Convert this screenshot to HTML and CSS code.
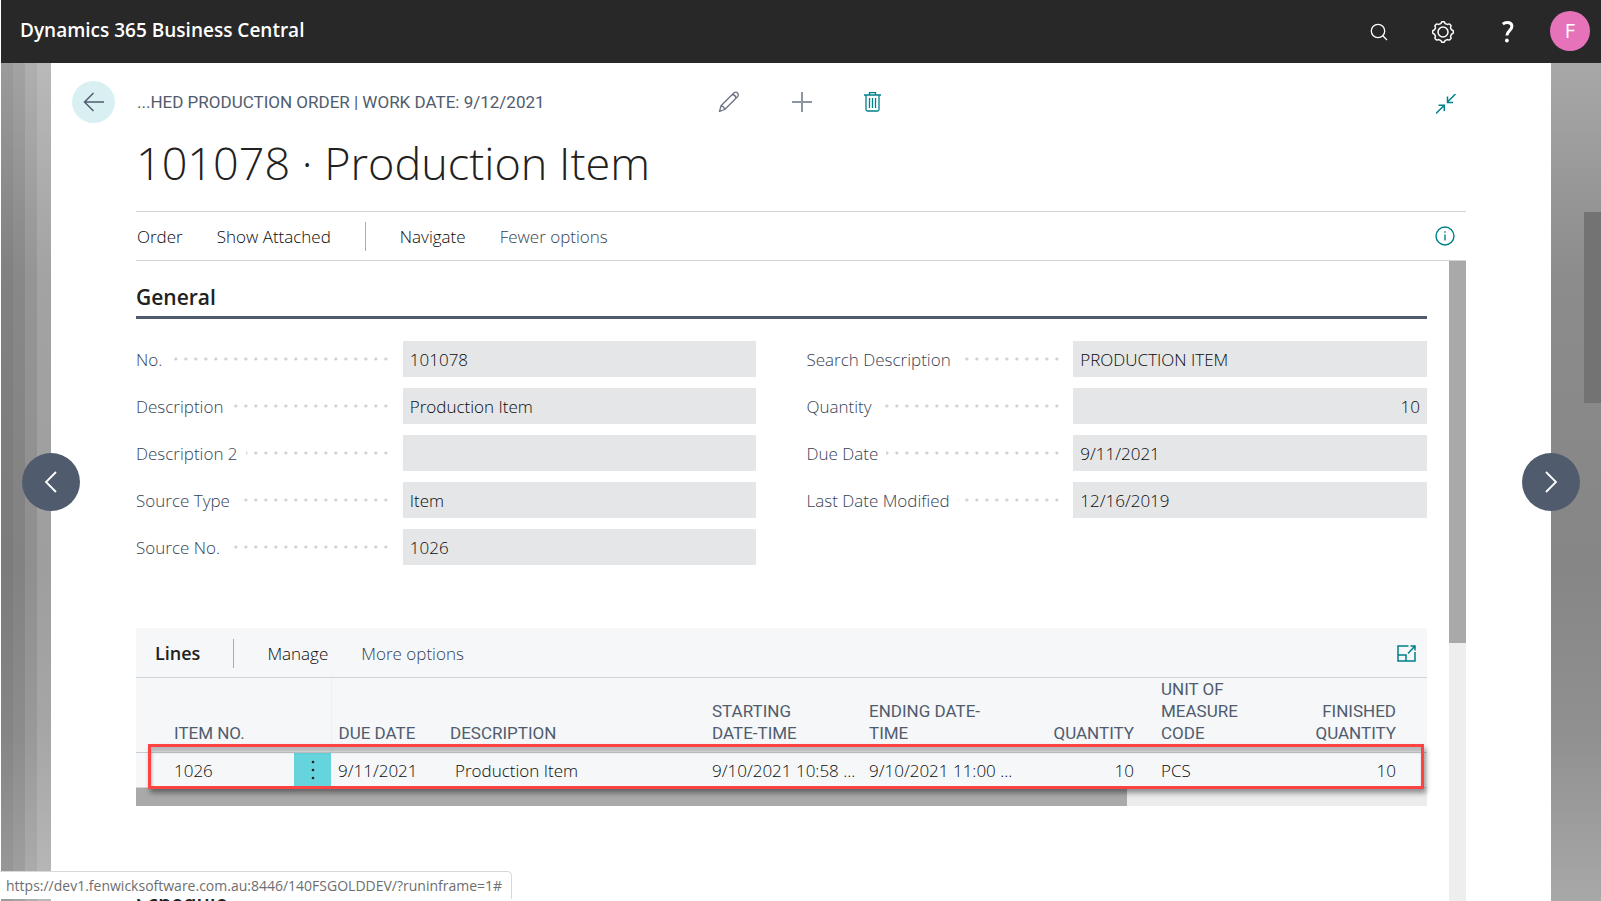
FILE: index.html
```
<!DOCTYPE html>
<html lang="en">
<head>
    <meta charset="UTF-8">
    <meta name="viewport" content="width=device-width, initial-scale=1.0">
    <title>Dynamics 365 Business Central</title>
    <link rel="stylesheet" href="styles.css">
</head>
<body>
    <header class="topbar">
        <span class="brand">Dynamics 365 Business Central</span>
        <div class="topbar-tools">
            <button class="icon-btn" aria-label="Search">
                <svg width="18" height="18" viewBox="0 0 18 18" fill="none" stroke="#fff" stroke-width="1.3"><circle cx="8" cy="8" r="6.7"/><path d="M12.8 12.8L17 17"/></svg>
            </button>
            <button class="icon-btn" aria-label="Settings">
                <svg width="24" height="24" viewBox="0 0 24 24" fill="none" stroke="#fff" stroke-width="1.5" stroke-linejoin="round"><circle cx="12" cy="12" r="5"/><path d="M9.7 3.6C10.3 3.3 10.4 1.7 11 1.7h2c.6 0 .7 1.6 1.3 1.9.7.3 1.3.5 1.9.8.7.2 1.8-.8 2.3-.4L20 5.500c.4.5-.6 1.600-.4 2.300.3.600.5 1.200.8 1.900.3.600 1.900.7 1.900 1.300v2c0 .6-1.600.7-1.900 1.300-.3.7-.5 1.300-.8 1.900-.2.7.8 1.800.4 2.300L18.500 20c-.5.4-1.600-.6-2.300-.4-.6.3-1.200.5-1.900.8-.6.3-.7 1.900-1.300 1.900h-2c-.6 0-.7-1.600-1.300-1.900-.7-.3-1.300-.5-1.900-.8-.7-.2-1.800.8-2.300.4L4 18.500c-.4-.5.6-1.600.4-2.300-.3-.6-.5-1.200-.8-1.900C3.300 13.700 1.700 13.600 1.700 13v-2c0-.6 1.600-.7 1.900-1.300.3-.7.5-1.300.8-1.900C4.600 7.100 3.600 6 4 5.500L5.500 4c.5-.4 1.600.6 2.300.4.6-.3 1.200-.5 1.900-.8z"/></svg>
            </button>
            <button class="icon-btn" aria-label="Help">
                <svg width="14" height="22" viewBox="0 0 14 22" fill="none" stroke="#fff" stroke-width="3"><path d="M1.8 3.200C3 2.200 4.600 1.600 6.300 1.600c2.800 0 4.600 1.500 4.600 4 0 3.900-5 4.200-5 8.900"/><circle cx="5.900" cy="19.500" r="1.900" fill="#fff" stroke="none"/></svg>
            </button>
            <button class="avatar">F</button>
        </div>
    </header>

    <div class="backdrop">
        <button class="pager pager-prev" aria-label="Previous">
            <svg width="14" height="22" viewBox="0 0 14 22" fill="none" stroke="#fff" stroke-width="1.8"><path d="M12 1L2 11l10 10"/></svg>
        </button>
        <button class="pager pager-next" aria-label="Next">
            <svg width="14" height="22" viewBox="0 0 14 22" fill="none" stroke="#fff" stroke-width="1.8"><path d="M2 1l10 10L2 21"/></svg>
        </button>
        <div class="page-scroll"></div>

        <main class="page">
            <div class="page-head">
                <button class="back" aria-label="Back">
                    <svg width="22" height="20" viewBox="0 0 22 20" fill="none" stroke="#505c6d" stroke-width="1.5"><path d="M21 10H2M10.5 1L1.5 10l9 9"/></svg>
                </button>
                <span class="caption">...HED PRODUCTION ORDER | WORK DATE: 9/12/2021</span>
                <div class="page-actions">
                    <button class="icon-btn" aria-label="Edit">
                        <svg width="22" height="22" viewBox="0 0 22 22" fill="none" stroke="#6b7280" stroke-width="1.3" stroke-linejoin="round"><path d="M1.5 20.500l1.500-5.700L15.800 2c1.200-1.200 2.800-.9 3.700 0s1.200 2.500 0 3.700L6.700 18.500zM3 14.800c1.800.2 3.400 1.700 3.700 3.700M14.300 3.500c1.800.2 3.400 1.700 3.700 3.700"/></svg>
                    </button>
                    <button class="icon-btn" aria-label="New">
                        <svg width="20" height="20" viewBox="0 0 20 20" stroke="#8d95a2" stroke-width="2"><path d="M0 10h20M10 0v20"/></svg>
                    </button>
                    <button class="icon-btn" aria-label="Delete">
                        <svg width="18" height="20" viewBox="0 0 18 20" fill="none" stroke="#008089" stroke-width="1.3"><path d="M0 3h17M5.500 3V.7h6V3M2 3v14.500q0 1.500 1.500 1.500h10q1.500 0 1.500-1.500V3M5.500 6v10M8.500 6v10M11.500 6v10"/></svg>
                    </button>
                </div>
                <button class="icon-btn collapse" aria-label="Collapse">
                    <svg width="20" height="20" viewBox="0 0 20 20" fill="none" stroke="#008089" stroke-width="1.5"><path d="M0 19.500l8.300-8.300M2.500 11.300H8.300V17M19.500 0l-8 8M11.500 2.500v6H17"/></svg>
                </button>
            </div>

            <h1>101078 · Production Item</h1>

            <nav class="commands">
                <button>Order</button>
                <button>Show Attached</button>
                <span class="divider"></span>
                <button>Navigate</button>
                <button class="muted">Fewer options</button>
                <button class="icon-btn info" aria-label="Details">
                    <svg width="20" height="20" viewBox="0 0 20 20" fill="none" stroke="#008089" stroke-width="1.4"><circle cx="10" cy="10" r="9"/><path d="M10 8.500v6M10 5.300v1.500"/></svg>
                </button>
            </nav>

            <div class="content">
                <div class="content-inner">
                    <section>
                        <h2 class="group-title">General</h2>
                        <div class="fields">
                            <div class="column">
                                <div class="field"><label for="no"><span>No.</span></label><input id="no" value="101078" readonly></div>
                                <div class="field"><label for="desc"><span>Description</span></label><input id="desc" value="Production Item" readonly></div>
                                <div class="field"><label for="desc2"><span>Description 2</span></label><input id="desc2" value="" readonly></div>
                                <div class="field"><label for="stype"><span>Source Type</span></label><input id="stype" value="Item" readonly></div>
                                <div class="field"><label for="sno"><span>Source No.</span></label><input id="sno" value="1026" readonly></div>
                            </div>
                            <div class="column">
                                <div class="field"><label for="search"><span>Search Description</span></label><input id="search" value="PRODUCTION ITEM" readonly></div>
                                <div class="field"><label for="qty"><span>Quantity</span></label><input id="qty" class="num" value="10" readonly></div>
                                <div class="field"><label for="due"><span>Due Date</span></label><input id="due" value="9/11/2021" readonly></div>
                                <div class="field"><label for="modified"><span>Last Date Modified</span></label><input id="modified" value="12/16/2019" readonly></div>
                            </div>
                        </div>
                    </section>

                    <section class="lines">
                        <div class="lines-bar">
                            <h3>Lines</h3>
                            <span class="divider"></span>
                            <button>Manage</button>
                            <button class="muted">More options</button>
                            <button class="icon-btn expand" aria-label="Expand">
                                <svg width="19" height="17" viewBox="0 0 19 17" fill="none" stroke="#008089" stroke-width="1.5"><path d="M11.500 1H1v15h17V7M1 10h8v6M11 8.500L17.500 1.500M13.500 1H18v4.500"/></svg>
                            </button>
                        </div>
                        <table>
                            <colgroup>
                                <col class="c-item"><col class="c-menu"><col class="c-due"><col><col class="c-date"><col class="c-date"><col class="c-qty"><col class="c-unit"><col class="c-fin">
                            </colgroup>
                            <thead>
                                <tr>
                                    <th class="first">ITEM NO.</th>
                                    <th class="sep"></th>
                                    <th>DUE DATE</th>
                                    <th>DESCRIPTION</th>
                                    <th>STARTING<br>DATE-TIME</th>
                                    <th>ENDING DATE-<br>TIME</th>
                                    <th class="num">QUANTITY</th>
                                    <th class="unit">UNIT OF<br>MEASURE<br>CODE</th>
                                    <th class="num last">FINISHED<br>QUANTITY</th>
                                </tr>
                            </thead>
                            <tbody>
                                <tr>
                                    <td class="first">1026</td>
                                    <td class="menu"><button aria-label="Row menu"><svg width="4" height="20" viewBox="0 0 4 20" fill="#212121"><circle cx="2" cy="2" r="1.3"/><circle cx="2" cy="10" r="1.3"/><circle cx="2" cy="18" r="1.3"/></svg></button></td>
                                    <td>9/11/2021</td>
                                    <td class="desc">Production Item</td>
                                    <td>9/10/2021 10:58 ...</td>
                                    <td>9/10/2021 11:00 ...</td>
                                    <td class="num">10</td>
                                    <td class="unit">PCS</td>
                                    <td class="num last">10</td>
                                </tr>
                            </tbody>
                        </table>
                        <div class="hscroll"><div class="hscroll-thumb"></div></div>
                        <div class="highlight"></div>
                    </section>

                    <h2 class="next-group">Schedule</h2>
                </div>
                <div class="vscroll"><div class="vscroll-thumb"></div></div>
            </div>
        </main>
    </div>

    <div class="status">https://dev1.fenwicksoftware.com.au:8446/140FSGOLDDEV/?runinframe=1#</div>
</body>
</html>
```
FILE: styles.css
```
* { box-sizing: border-box; }
body {
    margin: 0;
    height: 100vh;
    display: flex;
    flex-direction: column;
    overflow: hidden;
    font-family: "Open Sans", "Noto Sans", sans-serif;
    font-size: 17px;
    font-weight: 300;
    color: #0a0a0a;
    background: #fff;
}
h1, h2, h3 {
    margin: 0;
    color: #212121;
}
button {
    border: none;
    padding: 0;
    background: none;
    font: inherit;
    color: inherit;
    cursor: pointer;
}
svg { display: block; }
.icon-btn { display: flex; }
.muted { color: #364254; }
.divider {
    width: 1px;
    height: 29px;
    background: #a6adba;
}

.topbar {
    height: 63px;
    flex: none;
    margin-left: 1px;
    padding: 0 11px 2px 19px;
    display: flex;
    justify-content: space-between;
    align-items: center;
    background: #282828;
    color: #fff;
}
.brand {
    font-size: 19px;
    font-weight: 600;
    padding-bottom: 2px;
}
.topbar-tools {
    display: flex;
    align-items: center;
}
.topbar-tools .icon-btn {
    margin-right: 43px;
    padding-top: 2px;
}
.topbar-tools .icon-btn:nth-child(2) { margin-right: 46px; }
.topbar-tools .icon-btn:nth-child(3) { margin-right: 35px; }
.avatar {
    width: 40px;
    height: 40px;
    border-radius: 50%;
    background: #e673ba;
    font-size: 20px;
    font-weight: 400;
}

.backdrop {
    position: relative;
    flex: 1;
    min-height: 0;
    margin-left: 1px;
    padding: 0 50px;
    background:
        linear-gradient(to right, rgba(0,0,0,0.08) 12px, rgba(0,0,0,0.03) 12px, rgba(0,0,0,0.03) 24px, rgba(255,255,255,0.08) 24px, rgba(255,255,255,0.08) 36px, rgba(255,255,255,0.2) 36px, rgba(255,255,255,0.2) 50px, transparent 50px),
        linear-gradient(to bottom, #a8a8a8, #8c8c8c 25%, #868686 60%, #909090 80%, #a8a8a8);
}
.page {
    height: 100%;
    padding: 18px 85px 0 21px;
    display: flex;
    flex-direction: column;
    background: #fff;
}
.page-scroll {
    position: absolute;
    right: 0;
    top: 149px;
    width: 17px;
    height: 191px;
    background: #737373;
}
.pager {
    position: absolute;
    top: 390px;
    width: 58px;
    height: 58px;
    border-radius: 50%;
    background: #505c6d;
    display: flex;
    align-items: center;
    justify-content: center;
}
.pager-prev { left: 21px; }
.pager-next { right: 21px; }

.page-head {
    display: flex;
    align-items: center;
    height: 42px;
}
.back {
    width: 43px;
    height: 42px;
    border-radius: 50%;
    background: #d9f0f2;
    display: flex;
    align-items: center;
    justify-content: center;
}
.caption, th {
    font-family: Roboto, sans-serif;
    font-weight: 400;
    color: #505c6d;
}
.caption {
    width: 581px;
    margin-left: 22px;
    font-size: 17px;
}
.page-actions {
    display: flex;
    align-items: center;
    gap: 52px;
}
.collapse { margin: 4px 10px 0 auto; }
h1 {
    margin-left: 64px;
    height: 88px;
    line-height: 80px;
    font-size: 45px;
    font-weight: 300;
}
.commands {
    margin-left: 64px;
    height: 50px;
    padding: 0 11px 0 1px;
    display: flex;
    align-items: center;
    gap: 34px;
    border-top: 1px solid #d0d3d8;
    border-bottom: 1px solid #d0d3d8;
}
.info { margin-left: auto; }

.content {
    flex: 1;
    min-height: 0;
    margin-left: 64px;
    display: flex;
    overflow: hidden;
}
.content-inner {
    flex: 1;
    margin-right: 22px;
}
.vscroll {
    width: 17px;
    background: #eee;
}
.vscroll-thumb {
    height: 382px;
    background: #a9a9a9;
}
.group-title {
    height: 58px;
    padding-top: 20px;
    line-height: 32px;
    border-bottom: 3px solid #505c6d;
}
.group-title, .next-group {
    font-size: 21px;
    font-weight: 600;
}
.fields {
    display: grid;
    grid-template-columns: 1fr 1fr;
    column-gap: 50px;
    padding: 22px 0 63px;
}
.column {
    display: flex;
    flex-direction: column;
    gap: 11px;
}
.field {
    display: grid;
    grid-template-columns: 43% 57%;
    height: 36px;
}
.field label {
    margin-right: 12px;
    padding-top: 2px;
    line-height: 34px;
    color: #364254;
    background: radial-gradient(circle, #cfcfcf 1px, transparent 2px) right center / 10px 10px repeat-x;
}
.field label span {
    display: inline-block;
    padding-right: 8px;
    background: #fff;
}
.field input {
    width: 100%;
    border: none;
    padding: 1px 7px;
    font: inherit;
    color: inherit;
    background: #e5e6e8;
}
.field .num { text-align: right; }

.lines {
    position: relative;
    background: #f5f7f9;
}
.lines-bar {
    height: 50px;
    padding: 1px 11px 0 19px;
    display: flex;
    align-items: center;
    gap: 33px;
    border-bottom: 1px solid #d0d3d8;
}
.lines-bar h3 {
    font-size: 18px;
    font-weight: 600;
}
.expand { margin-left: auto; }
table {
    width: 100%;
    table-layout: fixed;
    border-collapse: collapse;
}
.c-item { width: 158px; }
.c-menu { width: 37px; }
.c-due { width: 112px; }
.c-date { width: 157px; }
.c-qty { width: 122px; }
.c-unit { width: 143px; }
.c-fin { width: 143px; }
th {
    height: 74px;
    padding: 0 7px 8px;
    vertical-align: bottom;
    text-align: left;
    font-size: 17px;
    line-height: 22px;
    border-bottom: 1px solid #c8ccd2;
    white-space: nowrap;
}
td {
    height: 35px;
    padding: 0 7px;
    white-space: nowrap;
    border-bottom: 1px solid #d0d3d8;
}
th.first, td.first { padding-left: 38px; }
th.sep { border-right: 1px solid #eeeff1; }
td.menu {
    padding: 0;
    background: #66d4dc;
}
.menu button {
    display: flex;
    width: 100%;
    justify-content: center;
}
td.desc { padding-left: 12px; }
.num, th.num { text-align: right; }
.unit, th.unit { padding-left: 20px; }
th.last, td.last { padding-right: 31px; }
.hscroll {
    height: 18px;
    background: #ececec;
}
.hscroll-thumb {
    width: 76.8%;
    height: 100%;
    background: #a9a9a9;
}
/* red frame round the selected row */
.highlight {
    position: absolute;
    left: 12px;
    right: 3px;
    top: 116px;
    height: 45px;
    border: 3px solid #ff4343;
    box-shadow: 2px 4px 5px rgba(0,0,0,0.4), inset 1px 5px 3px rgba(0,0,0,0.25);
    pointer-events: none;
}
.next-group {
    margin-top: 81px;
    line-height: 32px;
}

.status {
    position: absolute;
    left: 0;
    bottom: 2px;
    height: 28px;
    padding: 0 9px 0 6px;
    border: 1px solid #d8d8d8;
    border-left: none;
    border-bottom: none;
    border-radius: 0 5px 0 0;
    background: #fff;
    font-size: 14px;
    line-height: 28px;
    font-weight: 400;
    color: #6e6e6e;
}
```
